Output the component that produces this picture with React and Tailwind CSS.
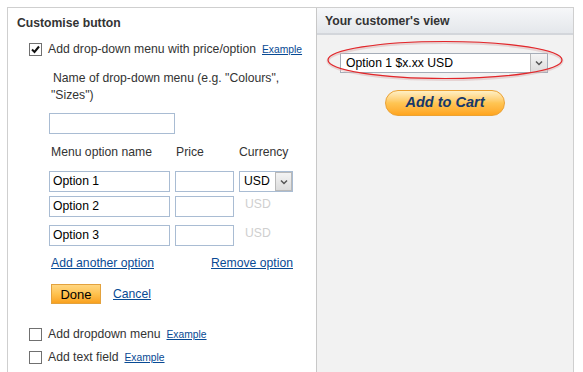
import React from 'react';

// small hand-drawn checkbox, matches the old-school windows look
const Check = ({ checked }) => (
  <div className="w-[13px] h-[13px] border border-[#707070] bg-white flex items-center justify-center shrink-0">
    {checked && (
      <svg width="9" height="9" viewBox="0 0 9 9">
        <path d="M1 4.5 L3.5 7 L8 1.5" stroke="#111" strokeWidth="2" fill="none" />
      </svg>
    )}
  </div>
);

const Arrow = ({ className }) => (
  <div className={`flex items-center justify-center bg-gradient-to-b from-[#f4f4f4] to-[#dcdcdc] border-l border-[#b9b9b9] ${className}`}>
    <svg width="8" height="6" viewBox="0 0 8 6">
      <path d="M1 1.5 L4 4.5 L7 1.5" stroke="#555" strokeWidth="1.5" fill="none" />
    </svg>
  </div>
);

const Example = () => (
  <a className="text-[10.3px] text-[#084a94] underline">Example</a>
);

const Field = ({ w, value }) => (
  <div className={`${w} h-[21px] border border-[#a9bcd3] bg-white flex items-center pl-[3px] text-[12.2px] text-black`}>
    {value}
  </div>
);

export default function App() {
  const rows = [
    { name: 'Option 1', mt: 'mt-[11px]', select: true },
    { name: 'Option 2', mt: 'mt-[4px]' },
    { name: 'Option 3', mt: 'mt-[8px]' },
  ];

  return (
    <div className="w-[583px] h-[372px] bg-white overflow-hidden pt-[7px] pl-[7px] font-['Liberation_Sans',Arial,sans-serif] text-[#333]">
      <div className="w-[567px] h-[380px] border-t border-l border-r border-[#cfcfcf] flex">
        {/* LEFT: customise form */}
        <div className="w-[308px] shrink-0 text-[12.2px]">
          <div className="h-[29px] flex items-center pl-[9px] pt-[1px] font-bold">Customise button</div>

          <div className="mt-[4px] h-[16px] flex items-center pl-[21px]">
            <Check checked />
            <span className="ml-[6px]">Add drop-down menu with price/option</span>
            <span className="ml-[6px] mt-[1px]"><Example /></span>
          </div>

          <div className="mt-[13px] pl-[43px] pr-[20px] leading-[17px] indent-[2px]">
            Name of drop-down menu (e.g. "Colours", "Sizes")
          </div>

          <div className="mt-[9px] ml-[41px]">
            <Field w="w-[126px]" value="" />
          </div>

          <div className="mt-[10px] h-[16px] flex items-center pl-[43px]">
            <span className="w-[125px]">Menu option name</span>
            <span className="w-[63px]">Price</span>
            <span>Currency</span>
          </div>

          {rows.map((r) => (
            <div key={r.name} className={`${r.mt} flex ml-[41px] gap-[5px]`}>
              <Field w="w-[121px]" value={r.name} />
              <Field w="w-[59px]" value="" />
              {r.select ? (
                <div className="w-[54px] h-[21px] border border-[#a9bcd3] flex bg-white">
                  <span className="flex-1 flex items-center pl-[4px] text-[12.2px] text-black">USD</span>
                  <Arrow className="w-[17px] border border-[#b9b9b9]" />
                </div>
              ) : (
                <span className="pl-[6px] -mt-[1px] text-[12.2px] text-[#cfcfcf]">USD</span>
              )}
            </div>
          ))}

          <div className="mt-[9px] h-[16px] flex items-center pl-[43px] text-[#084a94]">
            <a className="underline">Add another option</a>
            <a className="underline ml-[57px]">Remove option</a>
          </div>

          <div className="mt-[13px] flex items-center pl-[43px]">
            <button className="w-[50px] h-[20px] border border-[#e3a23e] bg-gradient-to-b from-[#ffd680] via-[#ffc24e] to-[#f9a11b] text-[13px] text-black">
              Done
            </button>
            <a className="ml-[12px] underline text-[#084a94]">Cancel</a>
          </div>

          <div className="mt-[22px] h-[16px] flex items-center pl-[21px]">
            <Check />
            <span className="ml-[6px]">Add dropdown menu</span>
            <span className="ml-[6px] mt-[1px]"><Example /></span>
          </div>

          <div className="mt-[7px] h-[16px] flex items-center pl-[21px]">
            <Check />
            <span className="ml-[6px]">Add text field</span>
            <span className="ml-[6px] mt-[1px]"><Example /></span>
          </div>
        </div>

        {/* RIGHT: preview */}
        <div className="flex-1 border-l border-[#c8c8c8] bg-[#f2f2f2]">
          <div className="h-[27px] flex items-center pl-[8px] pt-[1px] text-[12.2px] font-bold bg-gradient-to-b from-[#f6f7f9] to-[#e4e7eb] border-b-2 border-[#d3d6db]">
            Your customer's view
          </div>

          <div className="relative mt-[18px] ml-[23px]">
            <div className="w-[208px] h-[20px] border border-[#a5adb8] bg-white flex">
              <span className="flex-1 flex items-center pl-[5px] text-[12.2px] text-black">Option 1 $x.xx USD</span>
              <Arrow className="w-[17px]" />
            </div>
            <svg className="absolute left-[-14px] top-[-13px]" width="238" height="42" viewBox="0 0 238 42">
              <ellipse cx="119" cy="21" rx="117" ry="18.5" fill="none" stroke="#d9b3b3" strokeWidth="3" opacity="0.5" />
              <ellipse cx="119" cy="20" rx="117" ry="18.5" fill="none" stroke="#e3262a" strokeWidth="1.2" />
            </svg>
          </div>

          <div className="mt-[17px] ml-[68px]">
            <button className="w-[120px] h-[26px] rounded-full border border-[#eba234] bg-gradient-to-b from-[#fff0c4] via-[#ffc553] to-[#ffa51c] text-[14.5px] font-bold italic text-[#16386b]">
              Add to Cart
            </button>
          </div>
        </div>
      </div>
    </div>
  );
}
